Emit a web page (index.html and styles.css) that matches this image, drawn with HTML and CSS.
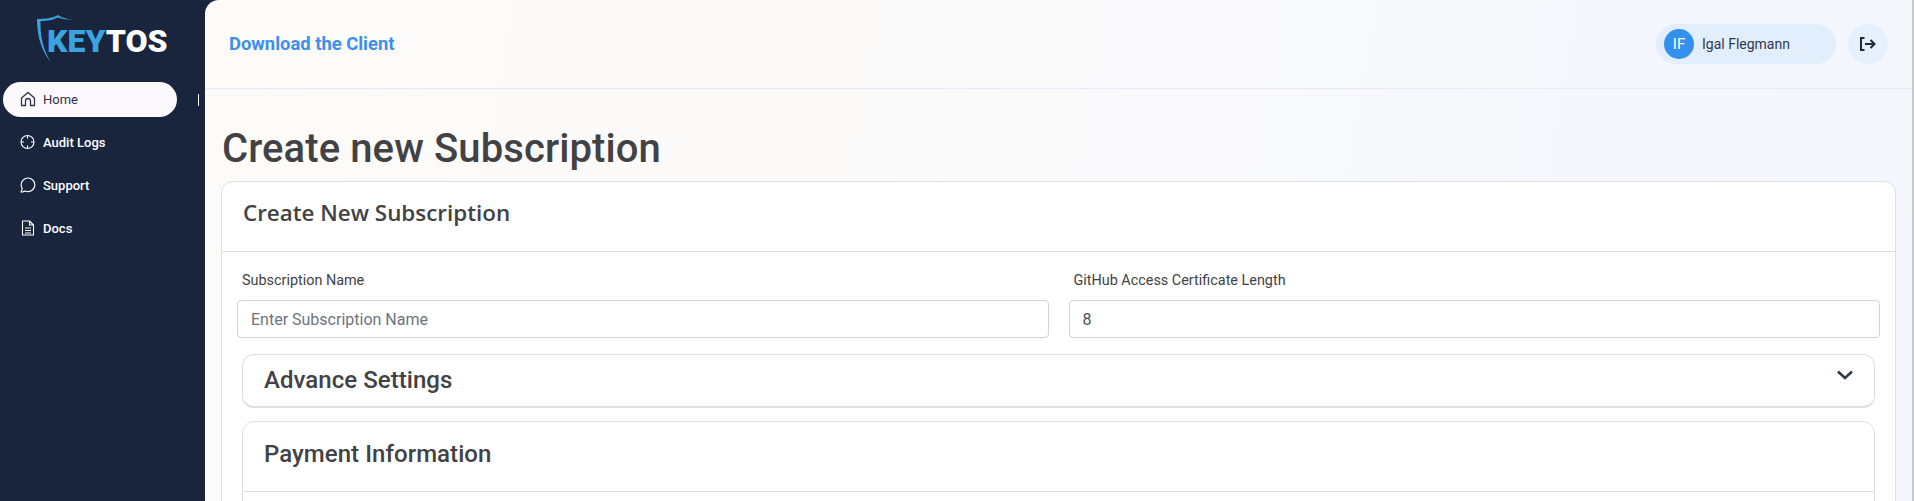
FILE: index.html
```html
<!DOCTYPE html>
<html lang="en">
<head>
    <meta charset="UTF-8">
    <title>Create new Subscription</title>
    <link rel="stylesheet" href="styles.css">
</head>
<body>
<div class="sidebar">
    <div class="logo">
        <svg class="shield" viewBox="0 0 34 50" width="34" height="50">
            <path d="M0 4 C8 4 16 3 21 0 C25 3 31 4 36 5 C29 4.500 25 4 21 2.500 C16 5 11 6 3.500 6 C3 20 6 35 14 47 C5 37 0 22 0 4 Z" fill="#3ba4e0"/>
        </svg>
        <span class="logo-key">KEY</span><span class="logo-tos">TOS</span>
    </div>
    <ul class="nav">
        <li class="nav-item current">
            <svg viewBox="0 0 16 16" width="16" height="16" fill="none" stroke="currentColor" stroke-width="1.300" stroke-linejoin="round">
                <path d="M1.500 7 L8 1.500 L14.500 7 V14.500 H10.500 V10 A2.500 2.500 0 0 0 5.500 10 V14.500 H1.500 Z"/>
            </svg>
            <span>Home</span>
        </li>
        <li class="nav-item">
            <svg viewBox="0 0 16 16" width="16" height="16" fill="none" stroke="currentColor" stroke-width="1.100">
                <circle cx="7.500" cy="8" r="6.500"/>
                <path d="M7.500 1.500 V4.500 M7.500 11.500 V14.500 M1 8 H4 M11 8 H14"/>
            </svg>
            <span>Audit Logs</span>
        </li>
        <li class="nav-item">
            <svg viewBox="0 0 16 16" width="16" height="16" fill="none" stroke="currentColor" stroke-width="1.100" stroke-linejoin="round">
                <path d="M1 15 L2.300 11.500 A6.800 6.800 0 1 1 5 13.900 Q3 15 1 15 Z"/>
            </svg>
            <span>Support</span>
        </li>
        <li class="nav-item">
            <svg viewBox="0 0 16 16" width="16" height="16" fill="none" stroke="currentColor" stroke-width="1.100" stroke-linejoin="round">
                <path d="M2.500 1 H9.500 L13.500 5 V15 H2.500 Z M9.500 1 V5 H13.500 M5 8 H11 M5 10.500 H11 M5 13 H11"/>
            </svg>
            <span>Docs</span>
        </li>
    </ul>
    <div class="handle"></div>
</div>
<div class="main">
    <div class="header">
        <a class="download" href="#">Download the Client</a>
        <div class="header-right">
            <div class="user">
                <span class="avatar">IF</span>
                <span>Igal Flegmann</span>
            </div>
            <div class="logout">
                <svg viewBox="0 0 16 14" width="16" height="14" fill="none" stroke="#1f2a3d" stroke-width="2">
                    <path d="M4.500 1 H1 V13 H4.500 M5 7 H14.500 M10.500 3 L14.500 7 L10.500 11"/>
                </svg>
            </div>
        </div>
    </div>
    <div class="content">
        <h1 class="title">Create new Subscription</h1>
        <div class="card">
            <div class="card-head">Create New Subscription</div>
            <div class="card-body">
                <div class="fields">
                    <div class="field">
                        <label>Subscription Name</label>
                        <input type="text" placeholder="Enter Subscription Name">
                    </div>
                    <div class="field">
                        <label>GitHub Access Certificate Length</label>
                        <input type="text" value="8">
                    </div>
                </div>
                <div class="accordion">
                    <h2>Advance Settings</h2>
                    <svg viewBox="0 0 16 10" width="16" height="10" fill="none" stroke="#2f3a4a" stroke-width="2.600">
                        <path d="M1 1.500 L8 8 L15 1.500"/>
                    </svg>
                </div>
                <div class="payment">
                    <div class="payment-head"><h2>Payment Information</h2></div>
                    <div class="payment-body"></div>
                </div>
            </div>
        </div>
    </div>
</div>
</body>
</html>
```

FILE: styles.css
```css
* {
    margin: 0;
    padding: 0;
    box-sizing: border-box;
}

ul {
    list-style: none;
}

html, body {
    height: 100%;
    overflow: hidden;
}

body {
    display: flex;
    background-color: #18253d;
    font-family: Roboto, "Liberation Sans", sans-serif;
    color: #424245;
}

/* left menu */
.sidebar {
    width: 205px;
    flex-shrink: 0;
    position: relative;
}

.logo {
    height: 82px;
    padding: 22px 0 0 47px;
    position: relative;
    font-size: 32px;
    font-weight: 900;
    line-height: 38px;
}

.shield {
    position: absolute;
    left: 37px;
    top: 15px;
    overflow: visible;
}

.logo-key {
    color: #3ba4e0;
}

.logo-tos {
    color: #fff;
}

.nav {
    display: flex;
    flex-direction: column;
    gap: 8px;
    padding-left: 3px;
}

.nav-item {
    width: 174px;
    height: 35px;
    display: flex;
    align-items: center;
    gap: 7px;
    padding: 0 0 1px 17px;
    border-radius: 18px;
    color: #fff;
    font-size: 13px;
    font-weight: 500;
}

.nav-item.current {
    background-color: #fbf9fb;
    color: #33304a;
    font-weight: 400;
}

.handle { /* little tick of the collapse button */
    position: absolute;
    left: 198px;
    top: 94px;
    width: 1px;
    height: 12px;
    background-color: #fff;
}

/* right side */
.main {
    flex: 1;
    border-right: 2px solid #c9c9cb;
    border-radius: 14px 0 0 0;
    background: linear-gradient(100deg, #fdfbf7 0%, #fbfafa 40%, #f3f6fe 100%);
    overflow: hidden;
}

.header {
    height: 89px;
    display: flex;
    align-items: center;
    justify-content: space-between;
    padding: 0 24px 1px 24px;
    border-bottom: 1px solid #e6ebf8;
}

.download {
    color: #3b8fee;
    font-size: 18.400px;
    font-weight: 700;
    text-decoration: none;
}

.header-right {
    display: flex;
    align-items: center;
    gap: 12px;
}

.user {
    width: 180px;
    height: 40px;
    display: flex;
    align-items: center;
    gap: 8px;
    padding-left: 8px;
    border-radius: 20px;
    background-color: #e2eefc;
    font-size: 14px;
    color: #33384d;
}

.avatar {
    width: 30px;
    height: 30px;
    border-radius: 50%;
    background-color: #3390ec;
    color: #fff;
    font-size: 15px;
    line-height: 30px;
    text-align: center;
}

.logout {
    width: 40px;
    height: 40px;
    display: flex;
    align-items: center;
    justify-content: center;
    border-radius: 50%;
    background-color: #e6f0fd;
}

.content {
    padding: 36px 16px 0 16px;
}

.title {
    font-size: 40px;
    font-weight: 500;
    line-height: 48px;
    letter-spacing: 0.100px;
    margin-bottom: 8px;
    padding-left: 1px;
}

.card {
    background-color: #fff;
    border: 1px solid #dfdfe3;
    border-radius: 12px;
}

.card-head {
    height: 70px;
    padding-left: 21px;
    border-bottom: 1px solid #dfdfe3;
    font-family: "Open Sans", sans-serif;
    font-size: 22.400px;
    font-weight: 600;
    line-height: 62px;
}

.card-body {
    padding: 16px 15px 0;
}

.fields {
    display: flex;
    gap: 20px;
}

.field {
    flex: 1;
}

.field label {
    display: block;
    padding: 2px 0 0 5px;
    margin-bottom: 8px;
    font-size: 14.400px;
    line-height: 22px;
}

.field input {
    display: block;
    width: 100%;
    height: 38px;
    padding: 0 13px;
    border: 1px solid #ced4da;
    border-radius: 4px;
    font-family: Roboto, sans-serif;
    font-size: 16px;
    color: #495057;
    outline: none;
}

.field input::placeholder {
    color: #6c757d;
}

.accordion, .payment {
    margin: 0 5px 0 5px;
    border: 1px solid #dfdfe3;
    border-radius: 12px;
}

h2 {
    font-size: 24px;
    font-weight: 500;
    letter-spacing: 0.050px;
}

.accordion {
    height: 54px;
    margin-top: 16px;
    padding: 0 21px 2px;
    display: flex;
    align-items: center;
    justify-content: space-between;
    border-bottom-width: 2px;
}

.accordion svg {
    margin-bottom: 10px;
}

.payment {
    margin-top: 13px;
}

.payment-head {
    height: 70px;
    padding: 0 21px 5px;
    display: flex;
    align-items: center;
    border-bottom: 1px solid #dfdfe3;
}

.payment-body {
    height: 60px;
}
```
